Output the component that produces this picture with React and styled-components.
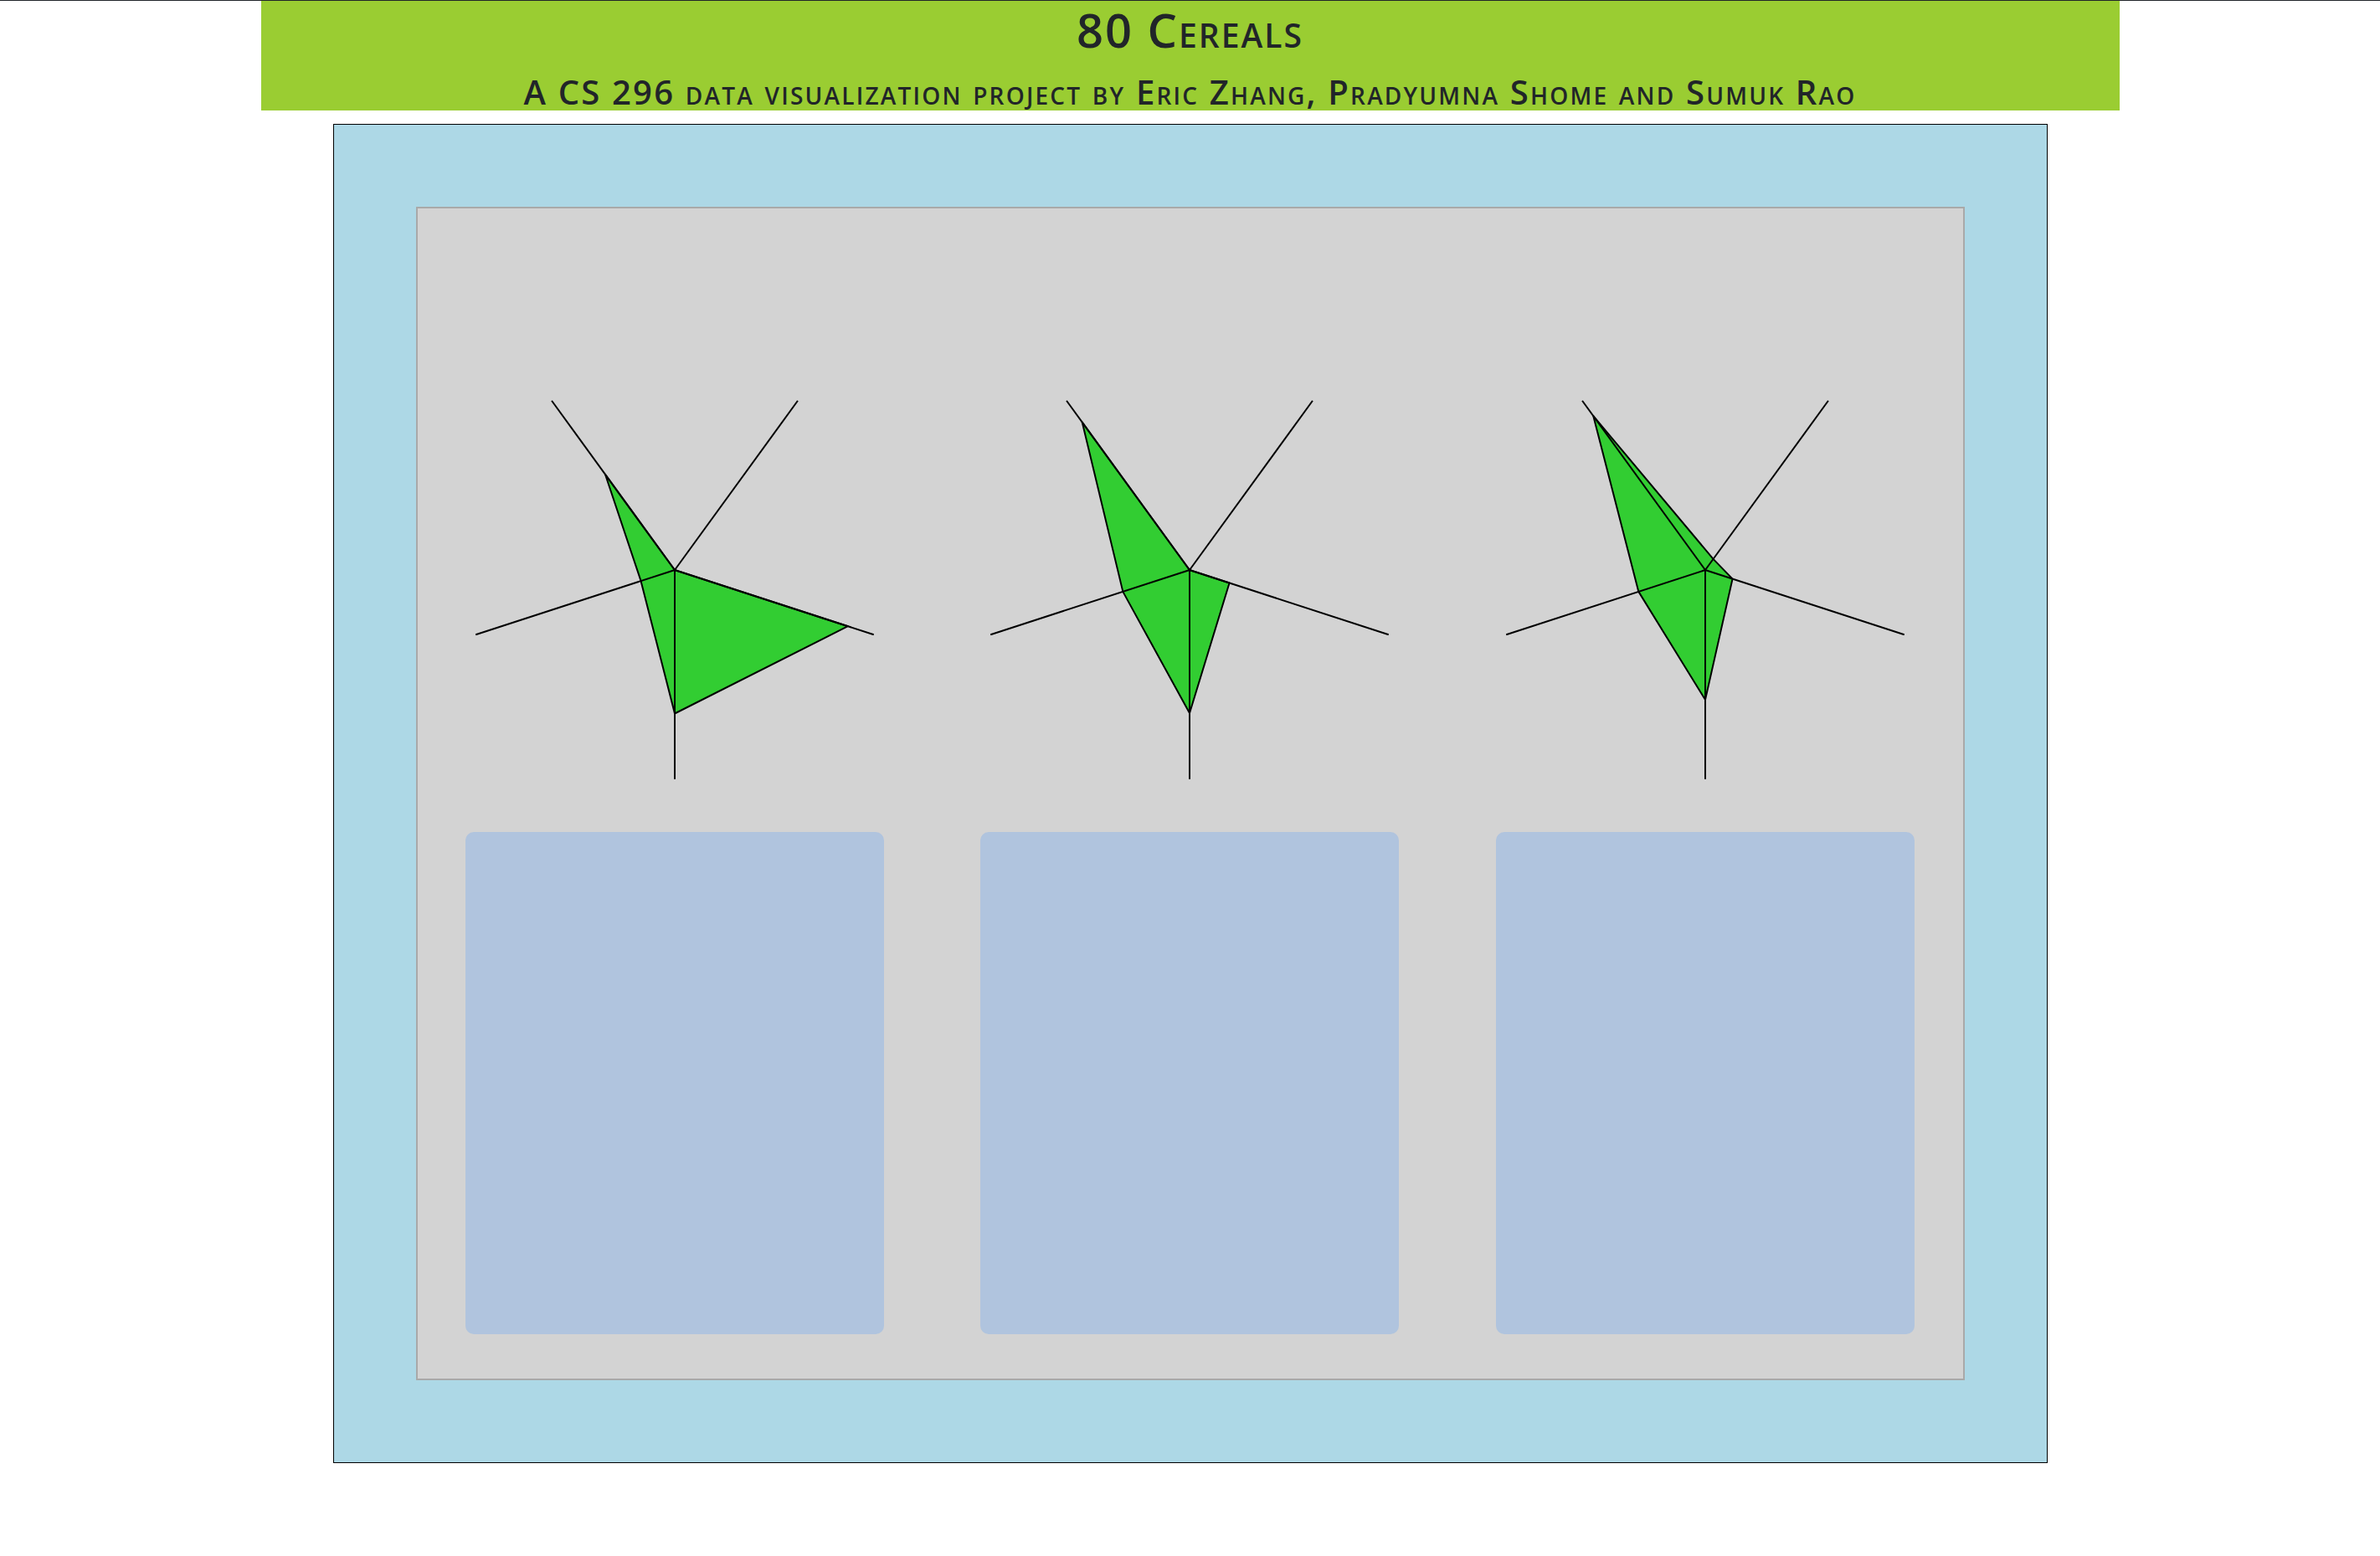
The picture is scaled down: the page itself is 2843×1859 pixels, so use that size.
import styled, { createGlobalStyle } from "styled-components"

const GlobalStyle = createGlobalStyle`
  html, body {
    margin: 0;
    padding: 0;
    background: #fff;
    font-family: "Open Sans", "Liberation Sans", sans-serif;
    color: #212529;
  }
`

const Page = styled.div`
  border-top: 1px solid #212529;
  display: flex;
  flex-direction: column;
  align-items: center;
`

const Header = styled.header`
  width: 2220px;
  height: 131px;
  background: #9acd32;
  display: flex;
  flex-direction: column;
  align-items: center;
  box-sizing: border-box;
  padding-top: 3px;
`

const Title = styled.h1`
  margin: 0;
  font-size: 56px;
  line-height: 62px;
  font-weight: 600;
  letter-spacing: 2px;
  font-variant: small-caps;
`

const Subtitle = styled.h4`
  margin: 0;
  margin-top: 24px;
  font-size: 40px;
  line-height: 40px;
  font-weight: 600;
  letter-spacing: 2.2px;
  font-variant: small-caps;
  white-space: nowrap;
`

const Board = styled.main`
  margin-top: 16px;
  width: 2048px;
  height: 1600px;
  box-sizing: border-box;
  background: #add8e6;
  border: 1px solid #000;
  padding: 98px;
`

const Stage = styled.section`
  height: 100%;
  box-sizing: border-box;
  background: #d3d3d3;
  border: 2px solid #a9a9a9;
  padding-top: 171px;
  display: grid;
  grid-template-columns: repeat(3, 1fr);
  align-items: start;
`

const Column = styled.div`
  display: flex;
  flex-direction: column;
  align-items: center;
  gap: 14px;
`

const Card = styled.div`
  width: 500px;
  height: 600px;
  background: #b0c4de;
  border-radius: 10px;
`

const RADIUS = 250
const CX = 250
const CY = 261

const pointAt = (i, v) => {
  const a = ((90 + 72 * i) * Math.PI) / 180
  return [CX + Math.cos(a) * RADIUS * v, CY + Math.sin(a) * RADIUS * v]
}

const Radar = ({ values }) => {
  const poly = values.map((v, i) => pointAt(i, v).join(",")).join(" ")
  return (
    <svg width="500" height="560" viewBox="0 0 500 560">
      <polygon points={poly} fill="#32cd32" stroke="#000" strokeWidth="2" strokeLinejoin="round" />
      {values.map((_, i) => {
        const [x, y] = pointAt(i, 1)
        return <line key={i} x1={CX} y1={CY} x2={x} y2={y} stroke="#000" strokeWidth="2" />
      })}
    </svg>
  )
}

// bottom, left, top-left, top-right, right
const cereals = [
  [0.686, 0.17, 0.565, 0, 0.87],
  [0.684, 0.335, 0.873, 0, 0.2],
  [0.62, 0.335, 0.91, 0.065, 0.137],
]

const App = () => (
  <Page>
    <GlobalStyle />
    <Header>
      <Title>80 Cereals</Title>
      <Subtitle>A CS 296 data visualization project by Eric Zhang, Pradyumna Shome and Sumuk Rao</Subtitle>
    </Header>
    <Board>
      <Stage>
        {cereals.map((values, i) => (
          <Column key={i}>
            <Radar values={values} />
            <Card />
          </Column>
        ))}
      </Stage>
    </Board>
  </Page>
)

export default App
